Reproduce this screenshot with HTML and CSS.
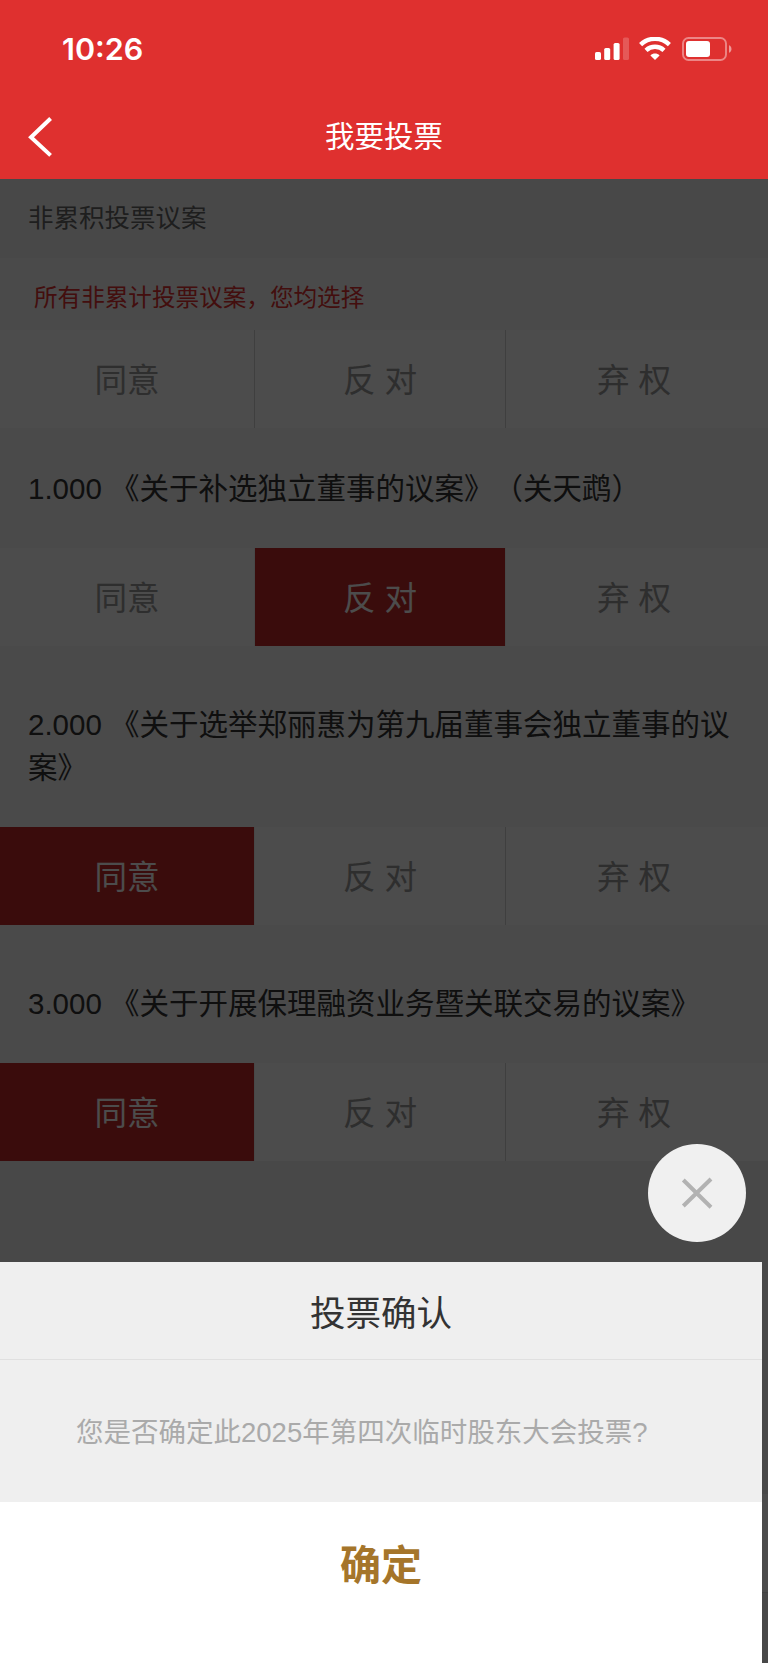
FILE: index.html
```html
<!DOCTYPE html>
<html lang="zh-CN">
<head>
    <meta charset="UTF-8">
    <meta name="viewport" content="width=device-width, initial-scale=1.0">
    <title>我要投票</title>
    <link rel="stylesheet" href="styles.css">
</head>
<body>
    <header class="header">
        <div class="status-bar">
            <span class="time">10:26</span>
            <div class="status-icons">
                <svg class="signal" width="34" height="24" viewBox="0 0 34 24" fill="#fff">
                    <rect x="0" y="15" width="6" height="8" rx="1.6"/>
                    <rect x="9.2" y="11" width="6" height="12" rx="1.6"/>
                    <rect x="18.6" y="6" width="6" height="17" rx="1.6"/>
                    <rect x="28" y="0.5" width="6" height="22.5" rx="1.6" opacity="0.2"/>
                </svg>
                <svg class="wifi" width="32" height="24" viewBox="0 0 32 24" fill="none" stroke="#fff">
                    <path d="M1.6 7.6C9.7 -0.1 22.3 -0.1 30.4 7.6" stroke-width="4.4"/>
                    <path d="M7 13.4C12 8.6 20 8.6 25 13.4" stroke-width="4.4"/>
                    <path d="M16 23L11.4 18.4C14 16 18 16 20.6 18.4Z" fill="#fff" stroke="none"/>
                </svg>
                <svg class="battery" width="50" height="24" viewBox="0 0 50 24" fill="none">
                    <rect x="1" y="1" width="43" height="22" rx="5.5" stroke="#fff" stroke-opacity="0.42" stroke-width="1.9"/>
                    <rect x="4" y="4" width="24" height="16" rx="3" fill="#fff"/>
                    <path d="M47 8.2C50.3 9.4 50.3 14.6 47 15.8Z" fill="#fff" fill-opacity="0.5"/>
                </svg>
            </div>
        </div>
        <div class="nav-bar">
            <a class="back" href="#">
                <svg width="26" height="40" viewBox="0 0 26 40" fill="none" stroke="#fff" stroke-width="4">
                    <path d="M22.6 1.5L3 20.2L22.6 38.4"/>
                </svg>
            </a>
            <h1 class="nav-title">我要投票</h1>
        </div>
    </header>

    <main class="content">
        <div class="section-title">非累积投票议案</div>
        <div class="note">所有非累计投票议案，您均选择</div>
        <div class="options">
            <div class="option">同意</div>
            <div class="option">反 对</div>
            <div class="option">弃 权</div>
        </div>

        <div class="proposal first">1.000 《关于补选独立董事的议案》（关天鹉）</div>
        <div class="options">
            <div class="option">同意</div>
            <div class="option active">反 对</div>
            <div class="option">弃 权</div>
        </div>

        <div class="proposal two-lines">2.000 《关于选举郑丽惠为第九届董事会独立董事的议案》</div>
        <div class="options">
            <div class="option active">同意</div>
            <div class="option">反 对</div>
            <div class="option">弃 权</div>
        </div>

        <div class="proposal">3.000 《关于开展保理融资业务暨关联交易的议案》</div>
        <div class="options">
            <div class="option active">同意</div>
            <div class="option">反 对</div>
            <div class="option">弃 权</div>
        </div>

        <div class="bottom-bar"></div>
    </main>

    <div class="mask"></div>

    <button class="close-button">
        <svg width="32" height="32" viewBox="0 0 32 32" fill="none" stroke="#b2b2b2" stroke-width="4">
            <path d="M2.3 3L30 30.2M30 2L2.3 29"/>
        </svg>
    </button>

    <div class="dialog">
        <div class="dialog-title">投票确认</div>
        <div class="dialog-text">您是否确定此2025年第四次临时股东大会投票?</div>
        <button class="dialog-ok">确定</button>
    </div>
</body>
</html>
```

FILE: styles.css
```css
* {
    box-sizing: border-box;
}

body {
    position: relative;
    margin: 0;
    height: 1663px;
    overflow: hidden;
    background-color: #f2f2f2;
    font-family: "Liberation Sans", "Noto Sans CJK SC", sans-serif;
    text-spacing-trim: space-all;
}

/* 顶部 */
.header {
    height: 179px;
    background-color: #df302f;
    color: #fff;
}

.status-bar {
    display: flex;
    justify-content: space-between;
    height: 95px;
    padding: 30px 36px 0 62px;
}

.time {
    font-family: Inter, sans-serif;
    font-size: 30.5px;
    font-weight: 600;
    line-height: 38px;
}

.status-icons {
    display: flex;
    align-items: flex-start;
    padding-top: 7px;
}

.wifi {
    margin-left: 10px;
}

.battery {
    margin-left: 11px;
}

.nav-bar {
    display: grid;
    grid-template-columns: 100px 1fr 100px;
    align-items: center;
    height: 84px;
}

.back {
    display: flex;
    padding-left: 28px;
}

.nav-title {
    margin: 0;
    font-size: 29.5px;
    font-weight: 400;
    line-height: 46px;
    text-align: center;
}

/* 议案列表 */
.content {
    height: 1484px;
}

.section-title {
    height: 79px;
    padding-left: 28px;
    font-size: 25.5px;
    line-height: 79px;
    color: #666;
}

.note {
    height: 72px;
    padding-left: 34px;
    background-color: #f7f7f7;
    font-size: 23.6px;
    line-height: 80px;
    color: #df302f;
}

.options {
    display: grid;
    grid-template-columns: 255px 251px 256px;
    height: 98px;
    background-color: #fdfdfd;
}

.option {
    height: 98px;
    border-right: 1px solid #d2d2d2;
    font-size: 32.6px;
    line-height: 102px;
    text-align: center;
    color: #999;
}

.option:last-child {
    border-right: none;
}

.option.active {
    background-color: #c22828;
    background-clip: padding-box;
    border-right-color: #f2f2f2;
    color: #fdfdfd;
}

/* 选中项左侧不显示分隔线 */
.option:has(+ .active) {
    border-right-color: #f2f2f2;
}

.proposal {
    height: 138px;
    padding: 57px 28px 0;
    background-color: #f7f7f7;
    font-size: 29.5px;
    line-height: 43px;
    color: #333;
}

.proposal.first {
    height: 120px;
    padding-top: 39px;
}

.proposal.two-lines {
    height: 181px;
}

.bottom-bar {
    height: 99px;
    margin-top: 333px;
    background-color: #fdfdfd;
    border-bottom: 1px solid #dedede;
}

/* 遮罩 */
.mask {
    position: absolute;
    top: 179px;
    left: 0;
    right: 0;
    bottom: 0;
    background-color: rgba(0, 0, 0, 0.7);
}

/* 确认弹窗 */
.close-button {
    position: absolute;
    left: 648px;
    top: 1144px;
    display: flex;
    align-items: center;
    justify-content: center;
    width: 98px;
    height: 98px;
    padding: 0;
    border: none;
    border-radius: 50%;
    background-color: #f0f0f0;
}

.dialog {
    position: absolute;
    left: 0;
    bottom: 0;
    display: flex;
    flex-direction: column;
    width: 762px;
    height: 401px;
    background-color: #efefef;
}

.dialog-title {
    height: 98px;
    border-bottom: 1px solid #e0e0e0;
    font-size: 35.5px;
    line-height: 104px;
    text-align: center;
    color: #333;
}

.dialog-text {
    height: 142px;
    padding-left: 76px;
    font-size: 27.5px;
    line-height: 146px;
    color: #aaa;
}

.dialog-ok {
    flex: 1;
    padding: 0 0 42px;
    border: none;
    background-color: #fff;
    font-family: inherit;
    font-size: 41px;
    font-weight: 700;
    color: #a5752a;
}
```
